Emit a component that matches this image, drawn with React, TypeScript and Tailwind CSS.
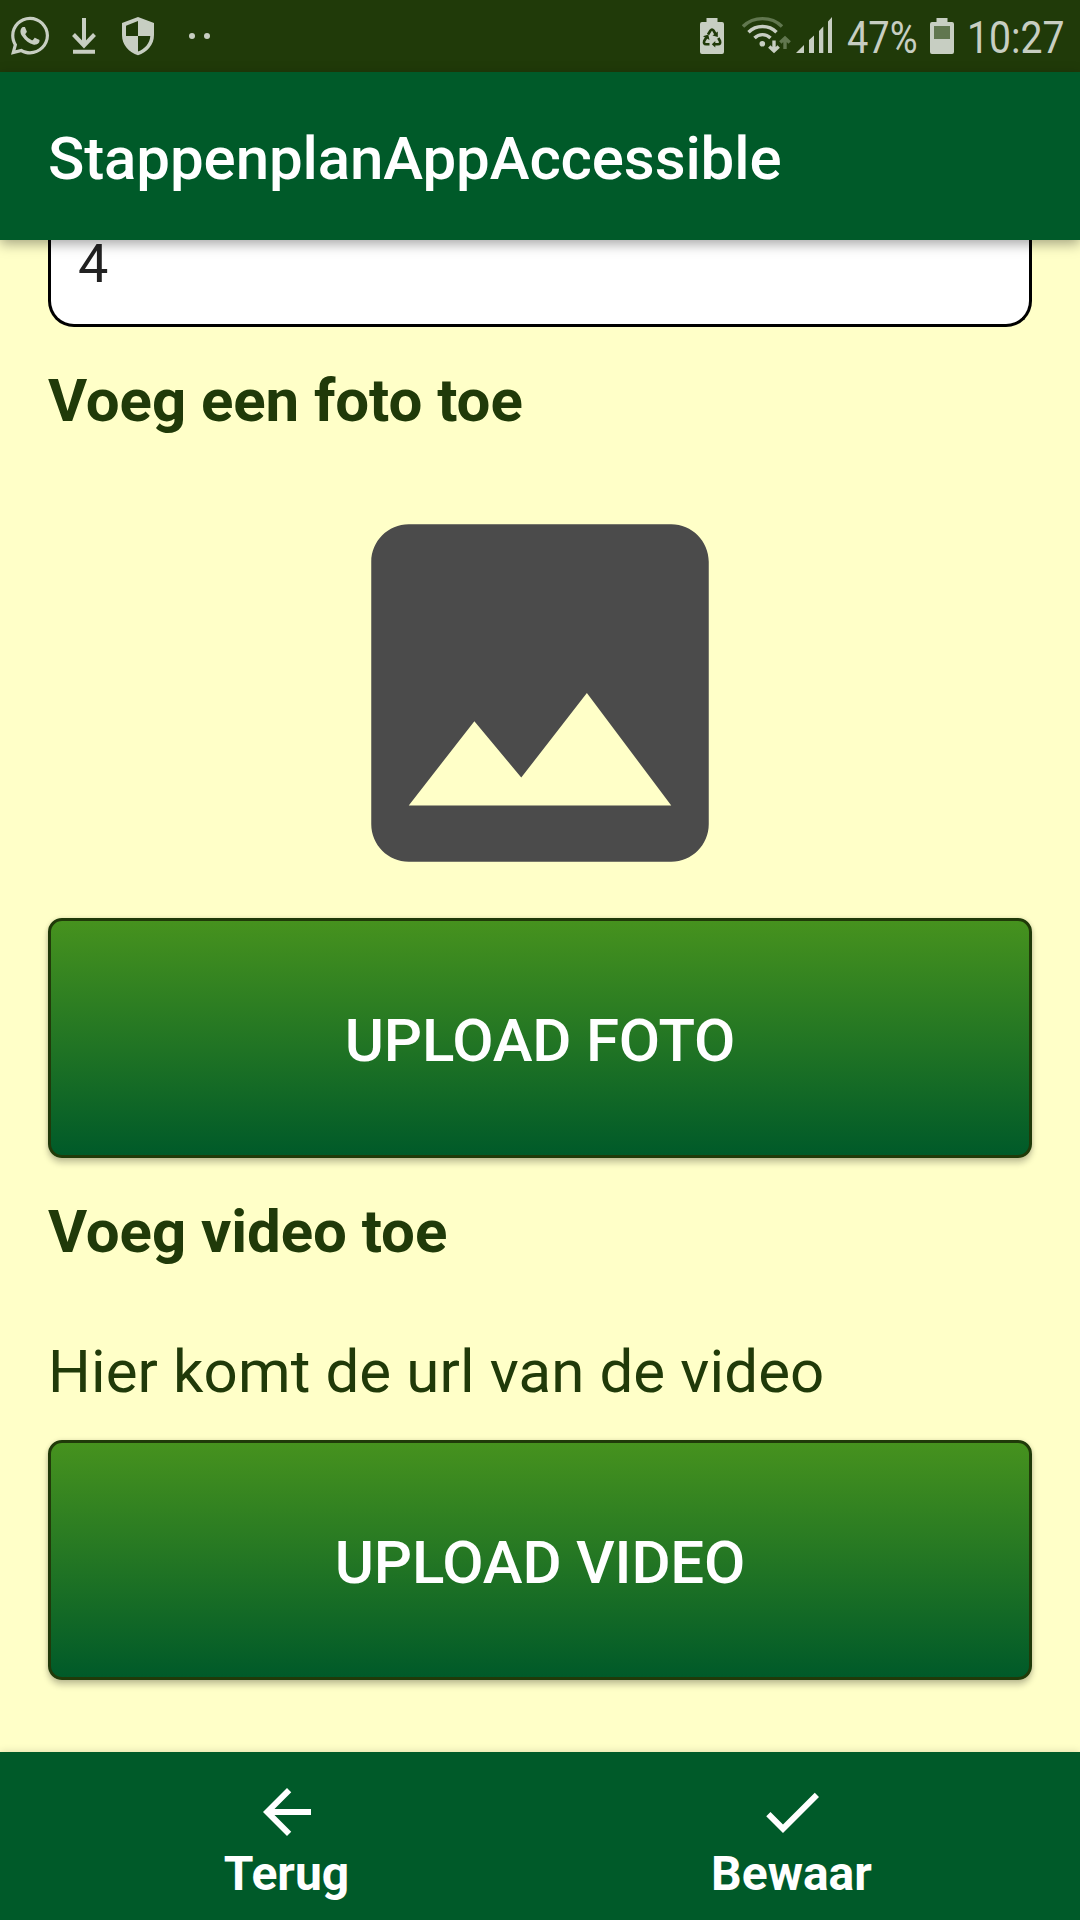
import React from "react";
import { FaWhatsapp } from "react-icons/fa";

function DownloadIcon() {
  return (
    <svg className="ml-[23px] h-[72px] w-[25px]" viewBox="72 0 25 72" fill="none" stroke="currentColor" strokeWidth="4">
      <path d="M84 18V46M73.500 34.500L84 45.500L94.500 34.500M73 51.700H95" />
    </svg>
  );
}

function ShieldIcon() {
  return (
    <svg className="ml-[24px] h-[72px] w-[34px]" viewBox="121 0 34 72" fill="currentColor">
      <path fillRule="evenodd" d="M138 17L154 23V35C154 45 147 52.500 138 55.200C129 52.500 122 45 122 35V23ZM138 21L126 25.700V36H138ZM138 36V51.500C145 49 150 43 150.300 36Z" />
    </svg>
  );
}

function WifiIcon() {
  return (
    <svg className="ml-[18px] h-[72px] w-[49px]" viewBox="742 0 49 72" fill="none" stroke="currentColor" strokeWidth="3.400">
      <path d="M743 26.500C753.500 16 771.500 16 782 26.500" stroke="#61774f" />
      <path d="M748.500 32.200C756 24.500 769 24.500 776.500 32.200M754.500 38C759 33.500 766 33.500 770.500 38" />
      <circle cx="762.300" cy="43.700" r="2.800" fill="currentColor" stroke="none" />
      <path d="M774 40.500V50M769.300 46.500L774 51L778.700 46.500" />
      <path d="M785 49V39M780.300 42.500L785 38L789.700 42.500" stroke="#61774f" />
    </svg>
  );
}

function SignalIcon() {
  return (
    <svg className="ml-[5px] h-[72px] w-[37px]" viewBox="796 0 37 72" fill="currentColor">
      <path d="M796 53L804 45V53ZM809 53V40L814 35.500V53ZM819 53V31L823.300 26.500V53ZM828 53V21.500L832 17V53Z" />
    </svg>
  );
}

const BATTERY = "M6.500 18H17.500V22H22Q24 22 24 24V52Q24 54 22 54H2Q0 54 0 52V24Q0 22 2 22H6.500Z";

function RecycleBatteryIcon() {
  return (
    <svg className="h-[72px] w-6" viewBox="0 0 24 72" fill="currentColor">
      <path d={BATTERY} />
      <g stroke="#203a09" strokeWidth="2.600" fill="none">
        <path d="M8 34.500L10.500 30.500Q12 28.500 13.500 30.500L15.500 34" />
        <path d="M18.300 38L20 41Q20.800 44.300 18 44.300H14.500" />
        <path d="M9.500 44.300H6Q3.300 44.300 4.200 41L6.300 37.500" />
      </g>
      <path d="M17.800 31.500V37L12.500 35.500ZM15.300 41V47.500L11.800 44.300ZM3 36.300L8.300 34.500L9.500 40Z" fill="#203a09" />
    </svg>
  );
}

function StatusBar() {
  return (
    <div className="flex h-[72px] items-center justify-between bg-[#203a09] pr-[12px] pl-[11px] text-[#c7cec2]">
      <div className="flex items-center">
        <FaWhatsapp className="h-[43.500px] w-[38px]" />
        <DownloadIcon />
        <ShieldIcon />
        <svg className="ml-[34px] h-[72px] w-[24px]" viewBox="189 0 24 72" fill="currentColor">
          <circle cx="192" cy="36" r="3" />
          <circle cx="207" cy="36" r="3" />
        </svg>
      </div>
      <div className="flex items-center">
        <RecycleBatteryIcon />
        <WifiIcon />
        <SignalIcon />
        <div className="ml-[14px] w-[71px] pt-[3px] text-[45px] leading-[69px]">
          <span className="inline-block origin-left scale-x-[0.845] whitespace-nowrap">47%</span>
        </div>
        <svg className="ml-[12px] h-[72px] w-6" viewBox="0 0 24 72" fill="currentColor">
          <path d={BATTERY} />
          <path d="M4 26H20V39H4Z" fill="#61774f" />
        </svg>
        <div className="ml-[13px] w-[101px] pt-[3px] text-[45px] leading-[69px]">
          <span className="inline-block origin-left scale-x-[0.870] whitespace-nowrap">10:27</span>
        </div>
      </div>
    </div>
  );
}

function UploadButton({ label }: { label: string }) {
  return (
    <button className="block h-[240px] w-full rounded-[14px] border-[3px] border-[#203a09] bg-linear-to-b/srgb from-[#46921e] to-[#005a29] pt-[5px] text-[60px] font-medium tracking-[-0.2px] text-white shadow-[0_5px_6px_rgba(0,0,0,0.22),0_0_4px_rgba(0,0,0,0.12)]">
      {label}
    </button>
  );
}

function NavItem({ label, path }: { label: string; path: string }) {
  return (
    <button className="flex flex-col items-center pt-6">
      <svg className="h-[72px] w-[72px]" viewBox="0 0 24 24" fill="currentColor"><path d={path} /></svg>
      <span className="-mt-[2px] text-[48px] leading-[56px] font-bold">{label}</span>
    </button>
  );
}

export default function App() {
  return (
    <div className="flex h-[1920px] w-[1080px] flex-col overflow-hidden bg-[#ffffc8] font-['Roboto',sans-serif] text-[#203a09]">
      <StatusBar />
      <header className="relative z-10 flex h-[168px] items-center bg-[#005a29] px-12 pt-[5px] text-[60px] font-medium tracking-[-0.1px] text-white shadow-[0_4px_12px_rgba(0,0,0,0.35)]">
        StappenplanAppAccessible
      </header>
      <main className="h-[1512px] px-12">
        <div className="h-[87px] rounded-b-[26px] border-[3px] border-t-0 border-black bg-white px-[27px]">
          <div className="-translate-y-2 text-[54px] leading-[64px] text-[#222222]">4</div>
        </div>
        <h2 className="mt-[39px] text-[60px] leading-[70px] font-bold tracking-[-0.08px]">Voeg een foto toe</h2>
        <svg className="mx-auto mt-8 h-[450px] w-[450px]" viewBox="0 0 24 24" fill="#4b4b4b">
          <path d="M21 19V5c0-1.100-.9-2-2-2H5c-1.100 0-2 .9-2 2v14c0 1.100.9 2 2 2h14c1.100 0 2-.9 2-2zM8.500 13.500l2.500 3.010L14.500 12l4.500 6H5l3.500-4.500z" />
        </svg>
        <UploadButton label="UPLOAD FOTO" />
        <h2 className="mt-[39px] text-[60px] leading-[70px] font-bold tracking-[-0.08px]">Voeg video toe</h2>
        <p className="mt-[70px] mb-[33px] text-[60px] leading-[70px] tracking-[0.12px]">Hier komt de url van de video</p>
        <UploadButton label="UPLOAD VIDEO" />
      </main>
      <nav className="grid h-[168px] grid-cols-2 bg-[#005a29] pr-9 pl-[34px] text-white shadow-[0_0_8px_rgba(0,0,0,0.15)]">
        <NavItem label="Terug" path="M20 11H7.830l5.590-5.590L12 4l-8 8 8 8 1.410-1.410L7.830 13H20v-2z" />
        <NavItem label="Bewaar" path="M9 16.170L4.830 12l-1.420 1.410L9 19 21 7l-1.410-1.410z" />
      </nav>
    </div>
  );
}
